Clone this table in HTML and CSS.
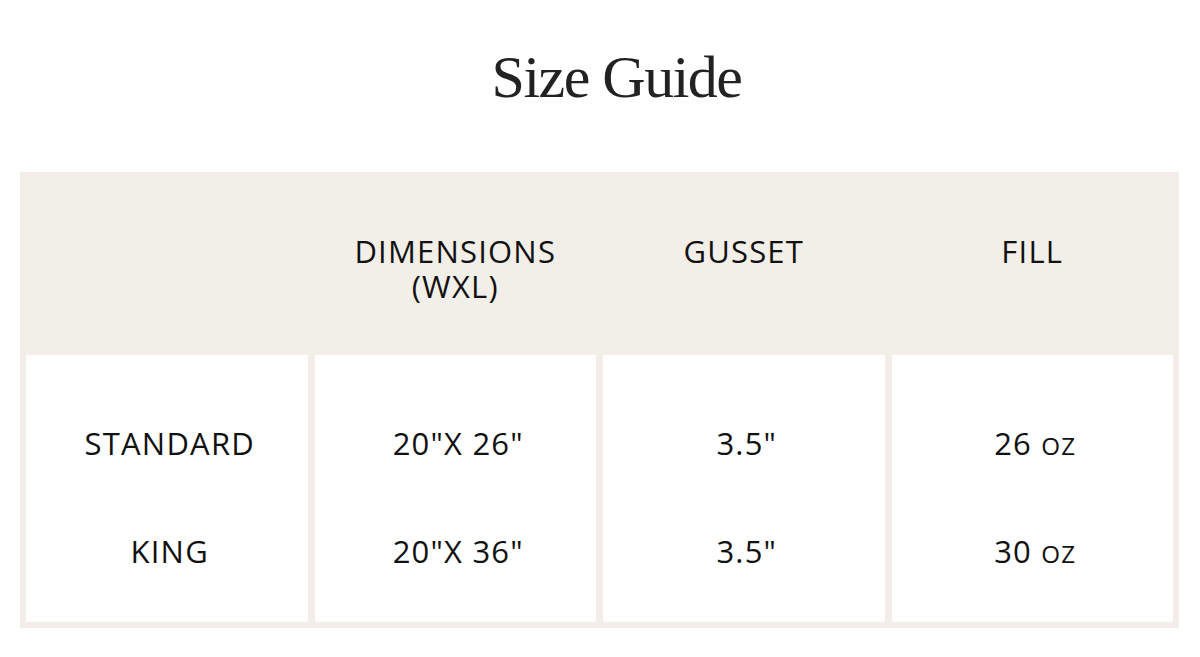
FILE: index.html
```html
<!DOCTYPE html>
<html lang="en">
<head>
<meta charset="utf-8">
<title>Size Guide</title>
<link rel="stylesheet" href="styles.css">
</head>
<body>
<main class="page">
  <h1 class="title">Size Guide</h1>
  <div class="table">
    <div class="head"></div>
    <div class="head">DIMENSIONS<br>(WXL)</div>
    <div class="head">GUSSET</div>
    <div class="head">FILL</div>
    <div class="cell"><span>STANDARD</span><span>KING</span></div>
    <div class="cell"><span>20"X 26"</span><span>20"X 36"</span></div>
    <div class="cell"><span>3.5"</span><span>3.5"</span></div>
    <div class="cell"><span>26 <small class="unit">oz</small></span><span>30 <small class="unit">oz</small></span></div>
  </div>
</main>
</body>
</html>
```
FILE: styles.css
```css
html, body {
  margin: 0;
  padding: 0;
  background: #ffffff;
}

.page {
  width: 1200px;
  height: 657px;
  padding: 43px 21px 0 20px;
  box-sizing: border-box;
  font-family: "Open Sans", "Liberation Sans", sans-serif;
  color: #111111;
}

.title {
  margin: 0;
  padding-left: 34px;
  text-align: center;
  font-family: "Liberation Serif", "Times New Roman", serif;
  font-weight: 400;
  font-size: 60px;
  line-height: 69px;
  letter-spacing: -1.5px;
  color: #222222;
  height: 129px;
}

.table {
  display: grid;
  grid-template-columns: repeat(4, 1fr);
  column-gap: 7px;
  padding: 0 6px 6px;
  background: #f2eee8;
}

.head {
  padding: 62px 0 50px;
  height: 71px;
  text-align: center;
  font-size: 31px;
  line-height: 35px;
  letter-spacing: 1.2px;
}

.cell {
  background: #ffffff;
  display: flex;
  flex-direction: column;
  align-items: center;
  padding: 34px 0 17px;
  font-size: 31px;
  line-height: 108px;
  letter-spacing: 1.2px;
}

.cell span {
  padding-left: 6px;
}

.unit {
  font-size: 0.78em;
  line-height: 1;
  text-transform: uppercase;
}
```
